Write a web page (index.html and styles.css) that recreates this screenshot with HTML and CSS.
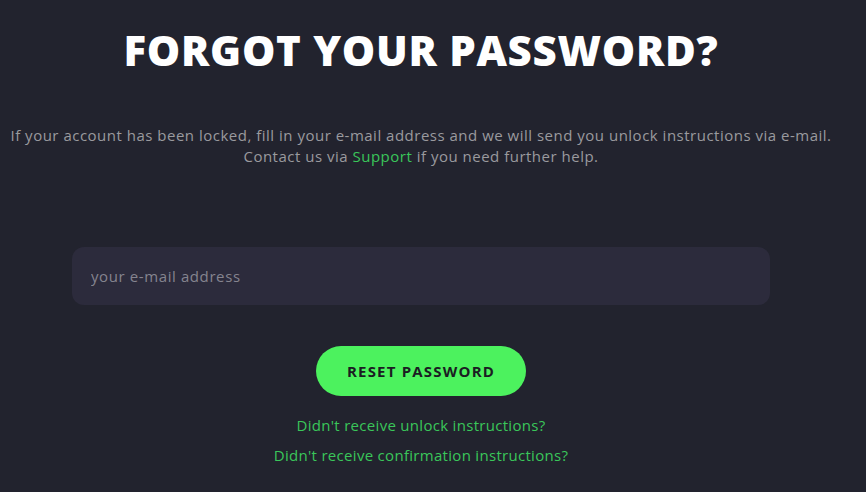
FILE: index.html
```html
<!DOCTYPE html>
<html lang="en">
<head>
<meta charset="utf-8">
<title>Forgot your password?</title>
<link rel="stylesheet" href="styles.css">
</head>
<body>
<main class="page">
  <h1 class="title">FORGOT YOUR PASSWORD?</h1>
  <p class="intro">If your account has been locked, fill in your e-mail address and we will send you unlock instructions via e-mail.<br>Contact us via <a class="link" href="#">Support</a> if you need further help.</p>
  <form class="form">
    <input class="field" type="email" placeholder="your e-mail address">
    <button class="btn" type="button">RESET PASSWORD</button>
  </form>
  <nav class="extra">
    <a class="link" href="#">Didn't receive unlock instructions?</a>
    <a class="link" href="#">Didn't receive confirmation instructions?</a>
  </nav>
</main>
</body>
</html>
```
FILE: styles.css
```css
html, body {
  margin: 0;
  padding: 0;
  background: #22232e;
}
body {
  font-family: "Open Sans", "DejaVu Sans", sans-serif;
  color: #9a9a9e;
  width: 866px;
  height: 492px;
  overflow: hidden;
}
.page {
  width: 842px;
  display: flex;
  flex-direction: column;
  align-items: center;
}
.title {
  margin: 24px 0 0;
  font-size: 42px;
  line-height: 52px;
  font-weight: 800;
  color: #ffffff;
  letter-spacing: 0.7px;
}
.intro {
  margin: 49px 0 0;
  font-size: 15px;
  line-height: 21px;
  letter-spacing: 0.5px;
  text-align: center;
  white-space: nowrap;
}
.link {
  color: #3ac65a;
  text-decoration: none;
}
.form {
  margin-top: 80px;
  display: flex;
  flex-direction: column;
  align-items: center;
}
.field {
  box-sizing: border-box;
  width: 698px;
  height: 58px;
  border: none;
  border-radius: 12px;
  background: #2c2b3c;
  padding: 0 19px;
  font-family: inherit;
  font-size: 15px;
  letter-spacing: 0.6px;
  color: #ddd;
  outline: none;
}
.field::placeholder {
  color: #85848f;
}
.btn {
  margin-top: 41px;
  width: 210px;
  height: 50px;
  border: none;
  border-radius: 25px;
  background: #4cf25e;
  color: #1b1d22;
  font-family: inherit;
  font-size: 15px;
  font-weight: 700;
  letter-spacing: 1.2px;
  cursor: pointer;
}
.extra {
  margin-top: 19px;
  display: flex;
  flex-direction: column;
  align-items: center;
  gap: 9px;
  font-size: 15px;
  line-height: 21px;
  letter-spacing: 0.3px;
}
```
